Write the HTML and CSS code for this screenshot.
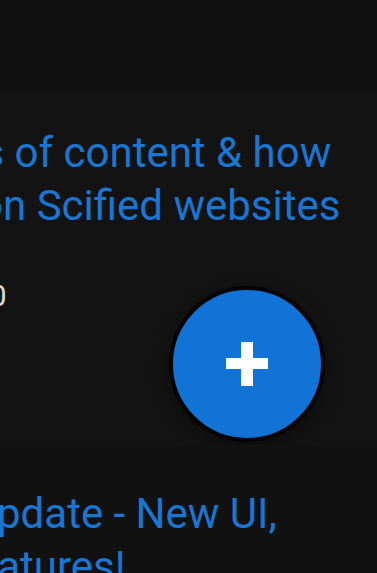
FILE: index.html
```html
<!DOCTYPE html>
<html>
<head>
<meta charset="utf-8">
<link rel="stylesheet" href="styles.css">
</head>
<body>
<div class="page">
  <div class="header-space"></div>
  <article class="card card-first">
    <h2 class="title">
      <span class="line line-a">types of content &amp; how</span>
      <span class="line line-b">to post on Scified websites</span>
    </h2>
    <div class="meta"><span class="line line-meta">Views: 120</span></div>
    <button class="fab" aria-label="Add">
      <svg width="42" height="44" viewBox="0 0 42 44"><rect x="15" y="0" width="12" height="44" fill="#fff"/><rect x="0" y="16" width="42" height="11" fill="#fff"/></svg>
    </button>
  </article>
  <article class="card card-second">
    <h2 class="title">
      <span class="line line-c">Scified Update - New UI,</span>
      <span class="line line-d">New Features!</span>
    </h2>
  </article>
</div>
</body>
</html>
```
FILE: styles.css
```css
html, body {
  margin: 0;
  padding: 0;
  background: #111111;
  overflow: hidden;
}
.page {
  width: 377px;
  height: 573px;
  overflow: hidden;
  font-family: Roboto, "Noto Sans", sans-serif;
}
.header-space {
  height: 90px;
  background: #111111;
}
.card {
  position: relative;
}
.card-first {
  background: #131313;
  height: 319px;
  padding-top: 36px;
}
.card-second {
  background: #111111;
  padding-top: 42px;
}
.title {
  margin: 0;
  font-weight: 400;
  font-size: 42px;
  line-height: 53px;
  color: #1976d2;
}
.line {
  display: block;
  white-space: nowrap;
}
.line-a { margin-left: -97px; }
.line-b { margin-left: -162px; }
.meta {
  margin-top: 46px;
  font-size: 30px;
  line-height: 36px;
  color: #dcdcdc;
}
.line-meta { margin-left: -139px; }
.line-c { margin-left: -167px; }
.line-d { margin-left: -142px; }
.fab {
  position: absolute;
  left: 169px;
  top: 196px;
  width: 156px;
  height: 156px;
  box-sizing: border-box;
  border: 4px solid #030303;
  border-radius: 50%;
  background: #1173d6;
  padding: 0;
  display: flex;
  align-items: center;
  justify-content: center;
  box-shadow: 0 6px 18px rgba(0, 0, 0, 0.35);
}
.fab svg {
  display: block;
}
```
